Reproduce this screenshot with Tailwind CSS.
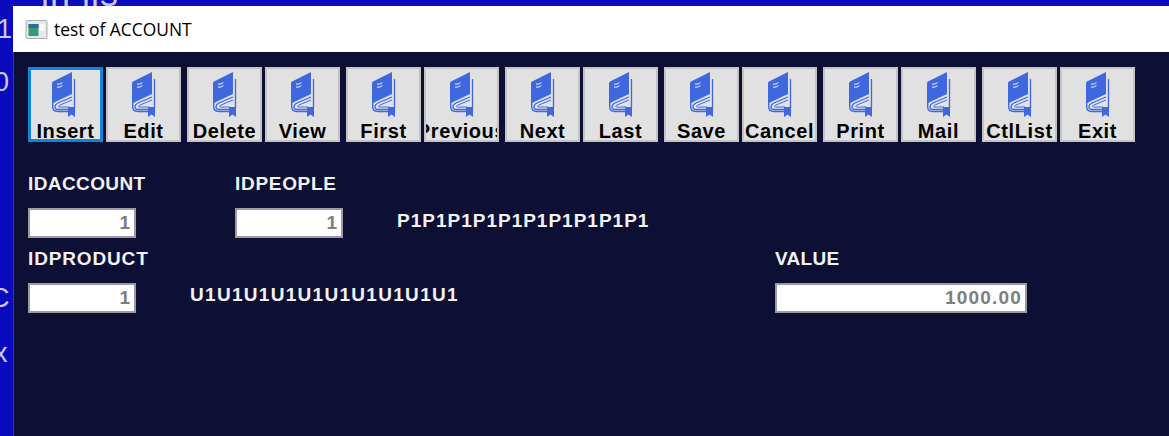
<!DOCTYPE html>
<html lang="en">
<head>
  <meta charset="UTF-8" />
  <title>test of ACCOUNT</title>
  <script src="https://cdn.jsdelivr.net/npm/@tailwindcss/browser@4"></script>
</head>
<body class="relative h-[436px] w-[1169px] overflow-hidden bg-[#0a0abf] font-['Liberation_Sans',sans-serif]">

  <!-- Desktop text behind the window -->
  <span class="absolute left-[41px] top-[-24px] text-[36px] leading-[36px] tracking-[1px] text-[#c9c9ea]">in lis</span>
  <span class="absolute left-[-3px] top-[11px] text-[27px] leading-[36px] text-[#c9c9ea]">1</span>
  <span class="absolute left-[-6px] top-[64px] text-[27px] leading-[36px] text-[#c9c9ea]">0</span>
  <span class="absolute left-[-10px] top-[280px] text-[27px] leading-[36px] text-[#c9c9ea]">C</span>
  <span class="absolute left-[-6px] top-[335px] text-[27px] leading-[36px] text-[#c9c9ea]">x</span>

  <svg class="hidden">
    <symbol id="book" viewBox="0 0 24 46">
      <path d="M0 12 Q0 11 1 10.500 L20 1 V23 L3 31 Q1 32 0 35 Z" fill="#3f68e0"/>
      <path d="M5 12.500 h2.500 l3 -1.500 v1.300 l-3 1.500 h-2.500 Z M5 15.500 h2.500 l3 -1.500 v1.300 l-3 1.500 h-2.500 Z" fill="#c8d4f5"/>
      <path d="M22.500 8 V37" fill="none" stroke="#3f68e0" stroke-width="1.300"/>
      <path d="M20 26 L6 32 C2 34 2 38.500 6 38.500 H17" fill="#dfe4f2" stroke="#3f68e0" stroke-width="1.300"/>
      <path d="M20 29 L8 34 C6 35 6 36 8 36 H17" fill="none" stroke="#3f68e0" stroke-width="1"/>
      <path d="M0.700 33 V36 C0.700 39 3 40.500 6 40.500 H17" fill="none" stroke="#3f68e0" stroke-width="1.400"/>
      <path d="M16 36 H23 V46 L19.500 43.500 L16 46 Z" fill="#3f68e0"/>
    </symbol>
    <symbol id="winicon" viewBox="0 0 22 19">
      <rect x="0.500" y="0.500" width="21" height="18" rx="1" fill="#e4e8ea" stroke="#a9adb3"/>
      <rect x="3" y="4" width="10" height="12" fill="#3a9a78"/>
      <rect x="3" y="4" width="10" height="4" fill="#2c6f96"/>
      <rect x="14" y="4" width="5" height="7" fill="#fbfbfb"/>
    </symbol>
  </svg>

  <!-- Window -->
  <div class="absolute left-[13px] top-[6px] flex h-[430px] w-[1156px] flex-col">
    <div class="flex h-[46px] shrink-0 items-center gap-[6px] bg-white pl-[12px] pt-[1px]">
      <svg class="h-[19px] w-[23px]"><use href="#winicon"/></svg>
      <span class="font-['Open_Sans',sans-serif] text-[17.400px] leading-none text-black">test of ACCOUNT</span>
    </div>

    <div class="flex-1 border-l border-[#3c3d6e] bg-[#0d0f35] pl-[14px] pt-[15px]">
      <!-- Toolbar -->
      <div class="flex gap-[6px] text-[20px] font-bold leading-[20px] text-black">
        <div class="flex gap-[3px]">
          <button class="flex h-[75px] w-[75px] flex-col items-center overflow-hidden border-[2px] border-[#c3c3c3] bg-[#e1e1e1] pt-[2px] outline-[3px] -outline-offset-[3px] outline-[#0f86de]"><svg class="-ml-[3px] h-[46px] w-[24px] shrink-0"><use href="#book"/></svg><span class="flex w-full justify-center whitespace-nowrap pt-[4px] tracking-[0.6px]">Insert</span></button>
          <button class="flex h-[75px] w-[75px] flex-col items-center overflow-hidden border-[2px] border-[#c3c3c3] bg-[#e1e1e1] pt-[2px]"><svg class="h-[46px] w-[24px] shrink-0"><use href="#book"/></svg><span class="flex w-full justify-center whitespace-nowrap pt-[4px] tracking-[0.6px]">Edit</span></button>
        </div>
        <div class="flex gap-[3px]">
          <button class="flex h-[75px] w-[75px] flex-col items-center overflow-hidden border-[2px] border-[#c3c3c3] bg-[#e1e1e1] pt-[2px]"><svg class="h-[46px] w-[24px] shrink-0"><use href="#book"/></svg><span class="flex w-full justify-center whitespace-nowrap pt-[4px] tracking-[0.6px]">Delete</span></button>
          <button class="flex h-[75px] w-[75px] flex-col items-center overflow-hidden border-[2px] border-[#c3c3c3] bg-[#e1e1e1] pt-[2px]"><svg class="h-[46px] w-[24px] shrink-0"><use href="#book"/></svg><span class="flex w-full justify-center whitespace-nowrap pt-[4px] tracking-[0.6px]">View</span></button>
        </div>
        <div class="flex gap-[3px]">
          <button class="flex h-[75px] w-[75px] flex-col items-center overflow-hidden border-[2px] border-[#c3c3c3] bg-[#e1e1e1] pt-[2px]"><svg class="h-[46px] w-[24px] shrink-0"><use href="#book"/></svg><span class="flex w-full justify-center whitespace-nowrap pt-[4px] tracking-[0.6px]">First</span></button>
          <button class="flex h-[75px] w-[75px] flex-col items-center overflow-hidden border-[2px] border-[#c3c3c3] bg-[#e1e1e1] pt-[2px]"><svg class="h-[46px] w-[24px] shrink-0"><use href="#book"/></svg><span class="flex w-full justify-center whitespace-nowrap pt-[4px] tracking-[0.6px]">Previous</span></button>
        </div>
        <div class="flex gap-[3px]">
          <button class="flex h-[75px] w-[75px] flex-col items-center overflow-hidden border-[2px] border-[#c3c3c3] bg-[#e1e1e1] pt-[2px]"><svg class="h-[46px] w-[24px] shrink-0"><use href="#book"/></svg><span class="flex w-full justify-center whitespace-nowrap pt-[4px] tracking-[0.6px]">Next</span></button>
          <button class="flex h-[75px] w-[75px] flex-col items-center overflow-hidden border-[2px] border-[#c3c3c3] bg-[#e1e1e1] pt-[2px]"><svg class="h-[46px] w-[24px] shrink-0"><use href="#book"/></svg><span class="flex w-full justify-center whitespace-nowrap pt-[4px] tracking-[0.6px]">Last</span></button>
        </div>
        <div class="flex gap-[3px]">
          <button class="flex h-[75px] w-[75px] flex-col items-center overflow-hidden border-[2px] border-[#c3c3c3] bg-[#e1e1e1] pt-[2px]"><svg class="h-[46px] w-[24px] shrink-0"><use href="#book"/></svg><span class="flex w-full justify-center whitespace-nowrap pt-[4px] tracking-[0.6px]">Save</span></button>
          <button class="flex h-[75px] w-[75px] flex-col items-center overflow-hidden border-[2px] border-[#c3c3c3] bg-[#e1e1e1] pt-[2px]"><svg class="h-[46px] w-[24px] shrink-0"><use href="#book"/></svg><span class="flex w-full justify-center whitespace-nowrap pt-[4px] tracking-[0.6px]">Cancel</span></button>
        </div>
        <div class="flex gap-[3px]">
          <button class="flex h-[75px] w-[75px] flex-col items-center overflow-hidden border-[2px] border-[#c3c3c3] bg-[#e1e1e1] pt-[2px]"><svg class="h-[46px] w-[24px] shrink-0"><use href="#book"/></svg><span class="flex w-full justify-center whitespace-nowrap pt-[4px] tracking-[0.6px]">Print</span></button>
          <button class="flex h-[75px] w-[75px] flex-col items-center overflow-hidden border-[2px] border-[#c3c3c3] bg-[#e1e1e1] pt-[2px]"><svg class="h-[46px] w-[24px] shrink-0"><use href="#book"/></svg><span class="flex w-full justify-center whitespace-nowrap pt-[4px] tracking-[0.6px]">Mail</span></button>
        </div>
        <div class="flex gap-[3px]">
          <button class="flex h-[75px] w-[75px] flex-col items-center overflow-hidden border-[2px] border-[#c3c3c3] bg-[#e1e1e1] pt-[2px]"><svg class="h-[46px] w-[24px] shrink-0"><use href="#book"/></svg><span class="flex w-full justify-center whitespace-nowrap pt-[4px] tracking-[0.6px]">CtlList</span></button>
          <button class="flex h-[75px] w-[75px] flex-col items-center overflow-hidden border-[2px] border-[#c3c3c3] bg-[#e1e1e1] pt-[2px]"><svg class="h-[46px] w-[24px] shrink-0"><use href="#book"/></svg><span class="flex w-full justify-center whitespace-nowrap pt-[4px] tracking-[0.6px]">Exit</span></button>
        </div>
      </div>

      <!-- Form -->
      <div class="mt-[30px] text-[19px] font-bold leading-[24px] text-[#f2f2f2]">
        <div class="flex h-[24px] tracking-[0.4px]">
          <span class="w-[207px]">IDACCOUNT</span>
          <span class="tracking-[0.7px]">IDPEOPLE</span>
        </div>
        <div class="mt-[12px] flex h-[30px] items-center">
          <div class="h-[30px] w-[108px] border-[2px] border-[#9a9aa8] bg-white pr-[4px] text-right leading-[26px] text-[#7d7d7d]">1</div>
          <div class="ml-[99px] h-[30px] w-[108px] border-[2px] border-[#9a9aa8] bg-white pr-[4px] text-right leading-[26px] text-[#7d7d7d]">1</div>
          <span class="ml-[54px] -mt-[4px] tracking-[1px]">P1P1P1P1P1P1P1P1P1P1</span>
        </div>
        <div class="mt-[9px] flex h-[24px] tracking-[0.3px]">
          <span class="w-[747px] tracking-[0.85px]">IDPRODUCT</span>
          <span>VALUE</span>
        </div>
        <div class="mt-[12px] flex h-[30px] items-center">
          <div class="h-[30px] w-[108px] border-[2px] border-[#9a9aa8] bg-white pr-[4px] text-right leading-[26px] text-[#7d7d7d]">1</div>
          <span class="ml-[54px] -mt-[6px] w-[585px] tracking-[1.3px]">U1U1U1U1U1U1U1U1U1U1</span>
          <div class="h-[30px] w-[252px] border-[2px] border-[#9a9aa8] bg-white pr-[3px] text-right leading-[26px] tracking-[1.2px] text-[#7d7d7d]">1000.00</div>
        </div>
      </div>
    </div>
  </div>
</body>
</html>
